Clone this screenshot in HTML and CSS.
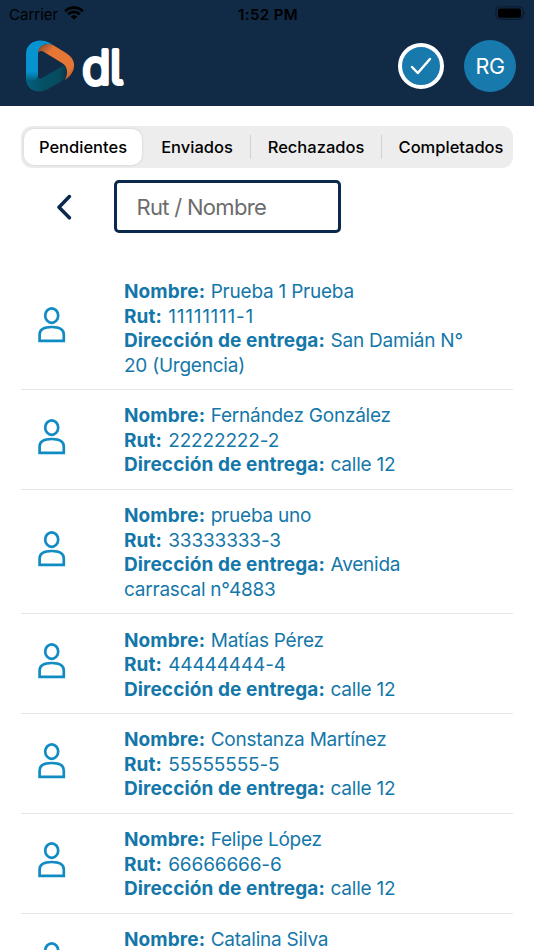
FILE: index.html
```html
<!DOCTYPE html>
<html lang="es">
<head>
    <meta charset="UTF-8">
    <meta name="viewport" content="width=device-width, initial-scale=1">
    <title>Pendientes</title>
    <link rel="stylesheet" href="styles.css">
</head>
<body>
    <!-- Shared icon used by every row -->
    <svg class="sprite" width="0" height="0">
        <symbol id="person" viewBox="0 0 28 36">
            <ellipse cx="13.7" cy="8.6" rx="6.5" ry="7.2"/>
            <path d="M1.6 33.8V27.5C1.6 21.8 6.5 20 13.7 20S25.8 21.8 25.8 27.5V33.8Z"/>
        </symbol>
    </svg>

    <header class="header">
        <div class="status-bar">
            <div class="carrier">
                <span>Carrier</span>
                <svg class="wifi" viewBox="0 0 20 14" width="20" height="14">
                    <path d="M1.2 5.2A12.6 12.6 0 0 1 18.8 5.2M4.2 8.3A8.3 8.3 0 0 1 15.8 8.3"/>
                    <path class="wifi-dot" d="M6.7 10.5A4.8 4.8 0 0 1 13.3 10.5L10 13.8Z"/>
                </svg>
            </div>
            <span class="clock">1:52 PM</span>
            <svg class="battery" viewBox="0 0 32 14" width="32" height="14">
                <rect class="battery-case" x="1" y=".8" width="27" height="12.6" rx="3.5"/>
                <rect x="3" y="2.6" width="23" height="9.2" rx="1.8"/>
                <path class="battery-tip" d="M29.3 5.2Q31.2 7 29.3 9Z"/>
            </svg>
        </div>
        <div class="nav">
            <div class="logo">
                <svg viewBox="0 0 106 54" width="106" height="54">
                    <defs>
                        <linearGradient id="blue" x1="0" y1="0" x2="0" y2="1">
                            <stop offset="0.75" stop-color="#0693d0"/>
                            <stop offset="1" stop-color="#045b78"/>
                        </linearGradient>
                        <linearGradient id="orange" x1="0" y1="0" x2="1" y2="1">
                            <stop offset="0" stop-color="#80452f"/>
                            <stop offset="0.28" stop-color="#e67635"/>
                            <stop offset="0.78" stop-color="#e67635"/>
                            <stop offset="1" stop-color="#a34f27"/>
                        </linearGradient>
                        <linearGradient id="teal" x1="0" y1="0" x2="1" y2="0">
                            <stop offset="0" stop-color="#04617f"/>
                            <stop offset="0.4" stop-color="#045066"/>
                            <stop offset="0.8" stop-color="#064c60"/>
                            <stop offset="1" stop-color="#0b3448"/>
                        </linearGradient>
                    </defs>
                    <path fill="url(#blue)" d="M1 41V15C1 3 14-2 25 4L28 6C19 3 13 8 13 15V38C10 43 4 44 1 41Z"/>
                    <path fill="url(#teal)" d="M1 40C5 43 11 42 13 38C13 39 15 40 17 39L36 28C41 25 43 28 42 33C42 36 40 40 37 42L23 50C12 56 1 50 1 40Z"/>
                    <path fill="url(#orange)" d="M13 15C13 7 20 3 28 6L41 14C53 21 51 34 40 41C44 33 42 27 37 24L19 13C16 11 13 12 13 15Z"/>
                    <text class="logo-text" x="57.3 85" y="45.2">dl</text>
                </svg>
            </div>
            <div class="check">
                <svg viewBox="0 0 24 20" width="24" height="20">
                    <path d="M3 11L8.8 17L21 3"/>
                </svg>
            </div>
            <div class="avatar">RG</div>
        </div>
    </header>

    <nav class="tabs">
        <a class="tab active"><span>Pendientes</span></a>
        <a class="tab sent"><span>Enviados</span></a>
        <a class="tab rejected"><span>Rechazados</span></a>
        <a class="tab done"><span>Completados</span></a>
    </nav>

    <div class="search">
        <svg class="back" viewBox="0 0 16 26" width="16" height="26">
            <path d="M13.4 2.6L3 13.2L13.4 23.8"/>
        </svg>
        <input class="search-input" type="text" placeholder="Rut / Nombre">
    </div>

    <main class="list">
        <div class="item">
            <svg class="person"><use href="#person"/></svg>
            <div class="info">
                <p><b>Nombre:</b> Prueba 1 Prueba</p>
                <p><b>Rut:</b> <span class="rut ones">11111111-1</span></p>
                <p><b>Dirección de entrega:</b> San Damián N° 20 (Urgencia)</p>
            </div>
        </div>
        <div class="item">
            <svg class="person"><use href="#person"/></svg>
            <div class="info">
                <p><b>Nombre:</b> Fernández González</p>
                <p><b>Rut:</b> <span class="rut">22222222-2</span></p>
                <p><b>Dirección de entrega:</b> calle 12</p>
            </div>
        </div>
        <div class="item">
            <svg class="person"><use href="#person"/></svg>
            <div class="info">
                <p><b>Nombre:</b> prueba uno</p>
                <p><b>Rut:</b> <span class="rut">33333333-3</span></p>
                <p><b>Dirección de entrega:</b> Avenida carrascal n°4883</p>
            </div>
        </div>
        <div class="item">
            <svg class="person"><use href="#person"/></svg>
            <div class="info">
                <p><b>Nombre:</b> Matías Pérez</p>
                <p><b>Rut:</b> <span class="rut">44444444-4</span></p>
                <p><b>Dirección de entrega:</b> calle 12</p>
            </div>
        </div>
        <div class="item">
            <svg class="person"><use href="#person"/></svg>
            <div class="info">
                <p><b>Nombre:</b> Constanza Martínez</p>
                <p><b>Rut:</b> <span class="rut">55555555-5</span></p>
                <p><b>Dirección de entrega:</b> calle 12</p>
            </div>
        </div>
        <div class="item">
            <svg class="person"><use href="#person"/></svg>
            <div class="info">
                <p><b>Nombre:</b> Felipe López</p>
                <p><b>Rut:</b> <span class="rut">66666666-6</span></p>
                <p><b>Dirección de entrega:</b> calle 12</p>
            </div>
        </div>
        <div class="item">
            <svg class="person"><use href="#person"/></svg>
            <div class="info">
                <p><b>Nombre:</b> Catalina Silva</p>
            </div>
        </div>
    </main>
</body>
</html>
```
FILE: styles.css
```css
* {
    box-sizing: border-box;
}

body {
    margin: 0;
    height: 950px;
    overflow: hidden;
    background-color: #fff;
    font-family: Inter, "Liberation Sans", sans-serif;
    color: #1477a9;
}

.sprite {
    display: block;
}

/* Header */
.header {
    height: 106px;
    background-color: #112a46;
}

.status-bar {
    display: grid;
    grid-template-columns: 1fr auto 1fr;
    align-items: center;
    height: 28px;
    padding: 0 7px 0 9px;
    color: #000;
    font-size: 15px;
}

.carrier {
    display: flex;
    align-items: center;
    gap: 6px;
}

.wifi {
    margin-top: -2px;
    fill: none;
    stroke: #000;
    stroke-width: 2.7;
}

.wifi-dot {
    fill: #000;
    stroke: none;
}

.clock {
    font-weight: 600;
    letter-spacing: 0.4px;
}

.battery {
    justify-self: end;
    margin-top: -2px;
}

.battery-case {
    fill: none;
    stroke: #0a1a2c;
}

.battery-tip {
    fill: #0a1a2c;
}

.nav {
    display: flex;
    align-items: center;
    height: 76px;
    padding: 0 18px 0 25px;
}

.logo {
    flex: 1;
    height: 54px;
}

.logo-text {
    font-size: 47px;
    font-weight: 300;
    font-feature-settings: "cv05";
    fill: #fff;
    stroke: #fff;
    stroke-width: 4.2;
    stroke-linejoin: round;
}

.check {
    display: flex;
    align-items: center;
    justify-content: center;
    width: 46px;
    height: 46px;
    margin-right: 20px;
    border: 4px solid #fff;
    border-radius: 50%;
    background-color: #1779ac;
}

.check path {
    fill: none;
    stroke: #fff;
    stroke-width: 2.5;
    stroke-linecap: round;
    stroke-linejoin: round;
}

.avatar {
    width: 52px;
    height: 52px;
    border-radius: 50%;
    background-color: #1779ac;
    color: #fff;
    font-size: 21.5px;
    letter-spacing: -0.5px;
    line-height: 53px;
    text-align: center;
}

/* Tabs */
.tabs {
    display: flex;
    height: 42px;
    margin: 20px 21px 0;
    padding: 3px;
    border-radius: 11px;
    background-color: #ededed;
    color: #000;
    font-size: 16.5px;
    font-weight: 500;
}

.tab {
    display: flex;
    flex: none;
    align-items: center;
    justify-content: center;
    height: 36px;
    line-height: 34px;
}

.active {
    width: 118px;
    border-radius: 10px;
    background-color: #fff;
    box-shadow: 0 0 3px rgba(0,0,0,0.14);
}

.sent {
    width: 108px;
    padding-left: 2px;
}

.rejected {
    width: 132px;
    background: linear-gradient(#d2d2d2, #d2d2d2) left / 1px 24px no-repeat, linear-gradient(#d2d2d2, #d2d2d2) right / 1px 24px no-repeat;
}

.done {
    width: 138px;
}

/* Search */
.search {
    display: flex;
    align-items: center;
    margin: 12px 0 0 56px;
}

.back {
    margin-right: 41.5px;
    fill: none;
    stroke: #0a294c;
    stroke-width: 3.5;
    stroke-linecap: round;
    stroke-linejoin: round;
}

.search-input {
    width: 227px;
    height: 53px;
    padding: 0 20px;
    border: 3px solid #0a294c;
    border-radius: 5px;
    outline: none;
    background-color: #fff;
    color: #333;
    font: 22px Inter, "Liberation Sans", sans-serif;
    letter-spacing: -0.7px;
}

.search-input::placeholder {
    color: #6c6c6c;
}

/* Patient list */
.list {
    margin: 33px 21px 0;
}

.item {
    display: flex;
    align-items: center;
    padding: 14.2px 0 11.1px;
    border-bottom: 1px solid #e5e5e5;
}

.item:last-child {
    align-items: flex-start;
    padding-bottom: 0;
    border-bottom: none;
}

.person {
    flex: none;
    width: 28px;
    height: 36px;
    margin: -9px 58px 0 17px;
    fill: none;
    stroke: #118bc4;
    stroke-width: 2.7;
}

.item:last-child .person {
    margin-top: 14px;
}

.info {
    width: 352px;
    font-size: 19px;
    line-height: 24.5px;
    letter-spacing: -0.23px;
}

.info b {
    margin-right: 0.5px;
    letter-spacing: 0.1px;
}

.info .rut {
    margin-left: 0.6px;
    letter-spacing: -0.15px;
}

.info .ones {
    letter-spacing: 0.75px;
}

.info p {
    margin: 0;
}
```
